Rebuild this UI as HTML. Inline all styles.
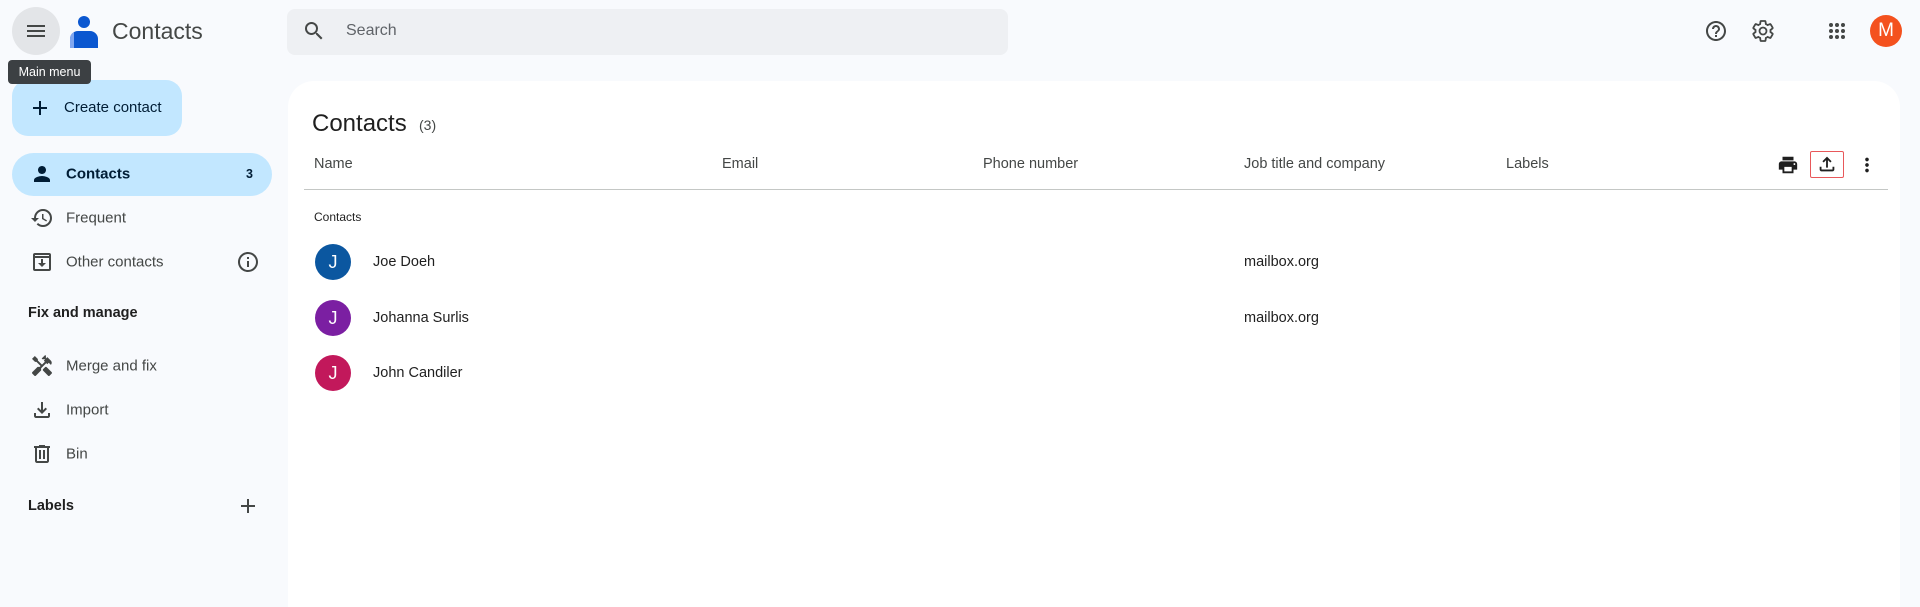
<!DOCTYPE html>
<html><head><meta charset="utf-8"><style>
*{box-sizing:border-box;margin:0;padding:0}
html,body{width:1920px;height:607px;overflow:hidden}
body{background:#f8fafd;font-family:"Liberation Sans",Arial,sans-serif;color:#1f1f1f;position:relative}
.a{position:absolute}
.ic{position:absolute;fill:#444746}
.nav{position:absolute;left:66px;font-size:15px;color:#1f1f1f;transform:translateY(-50%)}
.hd{position:absolute;top:164px;transform:translateY(-50%);font-size:14.5px;color:#444746}
.av{position:absolute;width:36px;height:36px;border-radius:50%;color:#fff;font-size:18px;text-align:center;line-height:36px;left:315px}
.nm{position:absolute;left:373px;font-size:14.5px;transform:translateY(-50%)}
.ml{position:absolute;left:1244px;font-size:14.5px;transform:translateY(-50%)}
</style></head><body>
<div class="a" style="left:12px;top:7px;width:48px;height:48px;border-radius:50%;background:#e3e5e8"></div>
<svg class="ic" style="left:24px;top:19px" width="24" height="24" viewBox="0 0 24 24"><path d="M3 18h18v-2H3v2zm0-5h18v-2H3v2zm0-7v2h18V6H3z"/></svg>
<svg class="a" style="left:69px;top:14px" width="30" height="34" viewBox="0 0 30 34"><circle cx="15" cy="8" r="6" fill="#0b57d0"/><path d="M1 34V25a8 8 0 0 1 8-8h12a8 8 0 0 1 8 8v9z" fill="#0b57d0"/><path d="M1 34V25a8 8 0 0 1 4-7v16z" fill="#7fa6f0"/></svg>
<div class="a" style="left:112px;top:18px;font-size:23px;color:#444746">Contacts</div>
<div class="a" style="left:287px;top:9px;width:721px;height:46px;border-radius:8px;background:#eef0f3"></div>
<svg class="ic" style="left:302px;top:19px" width="24" height="24" viewBox="0 0 24 24"><path d="M15.5 14h-.79l-.28-.27A6.47 6.47 0 0 0 16 9.5 6.5 6.5 0 1 0 9.5 16c1.61 0 3.09-.59 4.23-1.57l.27.28v.79l5 4.99L20.49 19l-4.99-5zm-6 0C7.01 14 5 11.99 5 9.5S7.01 5 9.5 5 14 7.01 14 9.5 11.99 14 9.5 14z"/></svg>
<div class="a" style="left:346px;top:22px;font-size:16px;color:#5f6368">Search</div>
<svg class="ic" style="left:1704px;top:19px" width="24" height="24" viewBox="0 0 24 24"><path d="M11 18h2v-2h-2v2zm1-16C6.48 2 2 6.48 2 12s4.48 10 10 10 10-4.48 10-10S17.52 2 12 2zm0 18c-4.41 0-8-3.590-8-8s3.59-8 8-8 8 3.59 8 8-3.59 8-8 8zm0-14c-2.21 0-4 1.79-4 4h2c0-1.1.9-2 2-2s2 .9 2 2c0 2-3 1.75-3 5h2c0-2.25 3-2.5 3-5 0-2.21-1.79-4-4-4z"/></svg>
<svg class="ic" style="left:1751px;top:19px" width="24" height="24" viewBox="0 0 24 24"><path d="M19.43 12.98c.04-.32.07-.64.07-.98s-.03-.66-.07-.98l2.11-1.65c.19-.15.24-.42.12-.64l-2-3.46c-.12-.22-.39-.3-.61-.22l-2.49 1c-.52-.4-1.08-.73-1.69-.98l-.38-2.65A.49.49 0 0 0 14 2h-4c-.25 0-.46.18-.49.42l-.38 2.65c-.61.25-1.17.59-1.69.98l-2.49-1c-.23-.09-.49 0-.61.22l-2 3.46c-.13.22-.07.49.12.64l2.11 1.65c-.04.32-.07.65-.07.98s.03.66.07.98l-2.11 1.65c-.19.15-.24.42-.12.64l2 3.46c.12.22.39.3.61.22l2.49-1c.52.4 1.08.73 1.69.98l.38 2.65c.03.24.24.42.49.42h4c.25 0 .46-.18.49-.42l.38-2.65c.61-.25 1.17-.59 1.69-.98l2.49 1c.23.09.49 0 .61-.22l2-3.46c.12-.22.07-.49-.12-.64l-2.11-1.65zM12 15.5c-1.93 0-3.5-1.57-3.5-3.5s1.57-3.5 3.5-3.5 3.5 1.57 3.5 3.5-1.57 3.5-3.5 3.5z" fill="none" stroke="#444746" stroke-width="1.8"/></svg>
<svg class="ic" style="left:1825px;top:19px" width="24" height="24" viewBox="0 0 24 24"><g><circle cx="6" cy="6" r="2"/><circle cx="12" cy="6" r="2"/><circle cx="18" cy="6" r="2"/><circle cx="6" cy="12" r="2"/><circle cx="12" cy="12" r="2"/><circle cx="18" cy="12" r="2"/><circle cx="6" cy="18" r="2"/><circle cx="12" cy="18" r="2"/><circle cx="18" cy="18" r="2"/></g></svg>
<div class="a" style="left:1870px;top:15px;width:32px;height:32px;border-radius:50%;background:#f4511e;color:#fff;font-size:19px;text-align:center;line-height:32px">M</div>
<div class="a" style="left:8px;top:60px;width:83px;height:24px;border-radius:4px;background:#3c4043;color:#fff;font-size:12.5px;line-height:24px;text-align:center;z-index:2">Main menu</div>
<div class="a" style="left:12px;top:80px;width:170px;height:56px;border-radius:16px;background:#c2e7ff"></div>
<svg class="a" style="left:28px;top:96px" width="24" height="24" viewBox="0 0 24 24"><path d="M19 13h-6v6h-2v-6H5v-2h6V5h2v6h6v2z" fill="#001d35"/></svg>
<div class="a" style="left:64px;top:99px;font-size:15px;color:#001d35">Create contact</div>
<div class="a" style="left:12px;top:153px;width:260px;height:43px;border-radius:22px;background:#c2e7ff"></div>
<svg class="a" style="left:30px;top:162px" width="24" height="24" viewBox="0 0 24 24"><path d="M12 12c2.21 0 4-1.79 4-4s-1.79-4-4-4-4 1.79-4 4 1.79 4 4 4zm0 2c-2.67 0-8 1.34-8 4v2h16v-2c0-2.66-5.33-4-8-4z" fill="#001d35"/></svg>
<div class="nav" style="top:174px;font-weight:bold;color:#001d35">Contacts</div>
<div class="a" style="left:246px;top:167px;font-size:12.5px;font-weight:bold;color:#001d35">3</div>
<svg class="ic" style="left:30px;top:206px" width="24" height="24" viewBox="0 0 24 24"><path d="M13 3a9 9 0 0 0-9 9H1l3.89 3.89.07.14L9 12H6c0-3.87 3.13-7 7-7s7 3.13 7 7-3.13 7-7 7c-1.93 0-3.68-.79-4.94-2.06l-1.42 1.42A8.95 8.95 0 0 0 13 21a9 9 0 0 0 0-18zm-1 5v5l4.28 2.54.72-1.21-3.5-2.08V8H12z"/></svg>
<div class="nav" style="top:218px;color:#444746">Frequent</div>
<svg class="ic" style="left:30px;top:250px" width="24" height="24" viewBox="0 0 24 24"><path d="M19 3H5a2 2 0 0 0-2 2v14a2 2 0 0 0 2 2h14a2 2 0 0 0 2-2V5a2 2 0 0 0-2-2zm0 16H5V8h14v11zM5 6V5h14v1H5zm7 11l4-4h-3V9h-2v4H8l4 4z"/></svg>
<div class="nav" style="top:262px;color:#444746">Other contacts</div>
<svg class="ic" style="left:236px;top:250px" width="24" height="24" viewBox="0 0 24 24"><path d="M11 7h2v2h-2zm0 4h2v6h-2zm1-9C6.48 2 2 6.48 2 12s4.48 10 10 10 10-4.48 10-10S17.52 2 12 2zm0 18c-4.41 0-8-3.59-8-8s3.59-8 8-8 8 3.59 8 8-3.59 8-8 8z"/></svg>
<div class="a" style="left:28px;top:305px;font-size:14.5px;font-weight:bold;color:#1f1f1f">Fix and manage</div>
<svg class="ic" style="left:30px;top:354px" width="24" height="24" viewBox="0 0 24 24"><path d="M21.67 18.17l-5.3-5.3h-.99l-2.54 2.54v.99l5.3 5.3c.39.39 1.02.39 1.41 0l2.12-2.12c.39-.38.39-1.02 0-1.41zM17.34 10.19l1.41-1.41 2.12 2.12a3 3 0 0 0 0-4.24l-3.54-3.54-1.41 1.41V1.71l-.7-.71-3.54 3.54.71.71h2.83l-1.41 1.41 1.06 1.06-2.89 2.89-4.13-4.13V5.06L4.83 2.04 2 4.87 5.03 7.9h1.41l4.13 4.13-.85.85H7.6l-5.3 5.3a.996.996 0 0 0 0 1.41l2.12 2.12c.39.39 1.02.39 1.41 0l5.3-5.3v-2.12l5.15-5.15 1.06 1.05z"/></svg>
<div class="nav" style="top:366px;color:#444746">Merge and fix</div>
<svg class="ic" style="left:30px;top:398px" width="24" height="24" viewBox="0 0 24 24"><path d="M18 15v3H6v-3H4v3c0 1.1.9 2 2 2h12c1.1 0 2-.9 2-2v-3h-2zm-1-4l-1.41-1.41L13 12.17V4h-2v8.17L8.41 9.59 7 11l5 5 5-5z"/></svg>
<div class="nav" style="top:410px;color:#444746">Import</div>
<svg class="ic" style="left:30px;top:442px" width="24" height="24" viewBox="0 0 24 24"><path d="M15 4V3H9v1H4v2h1v13c0 1.1.9 2 2 2h10c1.1 0 2-.9 2-2V6h1V4h-5zm2 15H7V6h10v13zM9 8h2v9H9zm4 0h2v9h-2z"/></svg>
<div class="nav" style="top:454px;color:#444746">Bin</div>
<div class="a" style="left:28px;top:498px;font-size:14.5px;font-weight:bold">Labels</div>
<svg class="ic" style="left:236px;top:494px" width="24" height="24" viewBox="0 0 24 24"><path d="M19 13h-6v6h-2v-6H5v-2h6V5h2v6h6v2z"/></svg>

<div class="a" style="left:288px;top:81px;width:1612px;height:526px;border-radius:26px 26px 0 0;background:#fff"></div>
<div class="a" style="left:312px;top:110px;font-size:24px;color:#1f1f1f">Contacts</div>
<div class="a" style="left:419px;top:117px;font-size:14px;color:#444746">(3)</div>
<div class="hd" style="left:314px">Name</div>
<div class="hd" style="left:722px">Email</div>
<div class="hd" style="left:983px">Phone number</div>
<div class="hd" style="left:1244px">Job title and company</div>
<div class="hd" style="left:1506px">Labels</div>
<svg class="ic" style="left:1777px;top:154px" width="22" height="22" viewBox="0 0 24 24"><path d="M19 8H5c-1.66 0-3 1.34-3 3v6h4v4h12v-4h4v-6c0-1.66-1.34-3-3-3zm-3 11H8v-5h8v5zm3-7c-.55 0-1-.45-1-1s.45-1 1-1 1 .45 1 1-.45 1-1 1zm-1-9H6v4h12V3z" fill="#1f1f1f"/></svg>
<div class="a" style="left:1810px;top:151px;width:34px;height:27px;border:1.5px solid #e8585a;border-radius:2px"></div>
<svg class="ic" style="left:1816px;top:153px" width="22" height="22" viewBox="0 0 24 24"><path d="M18 15v3H6v-3H4v3c0 1.1.9 2 2 2h12c1.1 0 2-.9 2-2v-3h-2zM7 9l1.41 1.41L11 7.83V16h2V7.83l2.59 2.58L17 9l-5-5-5 5z" fill="#1f1f1f"/></svg>
<svg class="ic" style="left:1856px;top:154px" width="22" height="22" viewBox="0 0 24 24"><path d="M12 8c1.1 0 2-.9 2-2s-.9-2-2-2-2 .9-2 2 .9 2 2 2zm0 2c-1.1 0-2 .9-2 2s.9 2 2 2 2-.9 2-2-.9-2-2-2zm0 6c-1.1 0-2 .9-2 2s.9 2 2 2 2-.9 2-2-.9-2-2-2z" fill="#1f1f1f"/></svg>
<div class="a" style="left:304px;top:189px;width:1584px;height:1px;background:#c4c7c5"></div>
<div class="a" style="left:314px;top:210px;font-size:12px;color:#1f1f1f">Contacts</div>
<div class="av" style="top:244px;background:#0b57a0">J</div>
<div class="nm" style="top:262px">Joe Doeh</div>
<div class="ml" style="top:262px">mailbox.org</div>
<div class="av" style="top:300px;background:#7b1fa2">J</div>
<div class="nm" style="top:318px">Johanna Surlis</div>
<div class="ml" style="top:318px">mailbox.org</div>
<div class="av" style="top:355px;background:#c2185b">J</div>
<div class="nm" style="top:373px">John Candiler</div>
</body></html>
